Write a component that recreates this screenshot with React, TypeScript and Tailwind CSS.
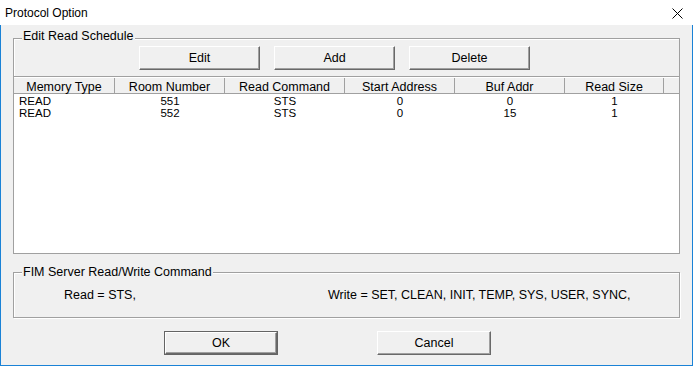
import React from "react";

const font = { fontFamily: '"Liberation Sans", Arial, sans-serif' };

function ClassicButton({ label, width, isDefault }: { label: string; width: string; isDefault?: boolean }) {
  if (isDefault) {
    return (
      <div className={`${width} h-[24px] border border-[#646464] box-border`}>
        <div className="w-full h-full box-border border border-t-white border-l-white border-r-[#696969] border-b-[#696969] shadow-[inset_-1px_-1px_0_#a0a0a0] bg-[#f0f0f0] flex items-center justify-center text-[12.5px] leading-[14px] text-black">
          {label}
        </div>
      </div>
    );
  }
  return (
    <div
      className={`${width} h-[24px] box-border border border-t-white border-l-white border-r-[#696969] border-b-[#696969] shadow-[inset_-1px_-1px_0_#a0a0a0] bg-[#f0f0f0] flex items-center justify-center text-[12.5px] leading-[14px] text-black`}
    >
      {label}
    </div>
  );
}

const rows = [
  ["READ", "551", "STS", "0", "0", "1"],
  ["READ", "552", "STS", "0", "15", "1"],
];

export default function App() {
  return (
    <div className="w-[693px] h-[366px] bg-[#f0f0f0] flex flex-col text-black overflow-hidden" style={font}>
      {/* Title bar */}
      <div className="h-[25px] bg-white flex items-center justify-between pl-[5px] pr-[10px] shrink-0">
        <span className="text-[12px] leading-[14px]">Protocol Option</span>
        <svg width="11" height="11" viewBox="0 0 11 11" className="mt-[1px]">
          <path d="M0.5 0.5 L10.5 10.5 M10.5 0.5 L0.5 10.5" stroke="#000" strokeWidth="1" fill="none" />
        </svg>
      </div>

      {/* Body */}
      <div className="flex-1 flex flex-col border-l border-r border-b border-[#1a82d6] px-[12px] pt-[13px]">
        {/* Group 1 top part */}
        <div className="relative h-[38px] box-border border-t border-l border-r border-[#a0a0a0] shadow-[inset_1px_1px_0_#fff]">
          <span className="absolute left-[8px] -top-[10px] px-[1px] bg-[#f0f0f0] text-[12.5px] leading-[14px]">
            Edit Read Schedule
          </span>
          <div className="flex gap-[14px] pl-[125px] pt-[7px]">
            <ClassicButton label="Edit" width="w-[121px]" />
            <ClassicButton label="Add" width="w-[121px]" />
            <ClassicButton label="Delete" width="w-[121px]" />
          </div>
        </div>

        {/* List view */}
        <div className="h-[178px] box-border border border-[#a0a0a0] bg-white flex flex-col">
          <div className="h-[17px] box-border border-b border-[#a0a0a0] border-t border-t-white bg-[#f0f0f0] flex text-[12.5px] leading-[14px]">
            <div className="w-[101px] box-border border-r border-[#a0a0a0] pt-[2px] text-center">Memory Type</div>
            <div className="w-[110px] box-border border-r border-[#a0a0a0] pt-[2px] text-center">Room Number</div>
            <div className="w-[120px] box-border border-r border-[#a0a0a0] pt-[2px] text-center">Read Command</div>
            <div className="w-[110px] box-border border-r border-[#a0a0a0] pt-[2px] text-center">Start Address</div>
            <div className="w-[110px] box-border border-r border-[#a0a0a0] pt-[2px] text-center">Buf Addr</div>
            <div className="w-[99px] box-border border-r border-[#a0a0a0] pt-[2px] text-center">Read Size</div>
            <div className="flex-1" />
          </div>
          <div className="flex flex-col">
            {rows.map((r, i) => (
              <div key={i} className="flex h-[12px] text-[11.5px] leading-[12px] pt-[1px]">
                <div className="w-[101px] pl-[5px]">{r[0]}</div>
                <div className="w-[110px] text-center">{r[1]}</div>
                <div className="w-[120px] text-center">{r[2]}</div>
                <div className="w-[110px] text-center">{r[3]}</div>
                <div className="w-[110px] text-center">{r[4]}</div>
                <div className="w-[99px] text-center">{r[5]}</div>
              </div>
            ))}
          </div>
        </div>

        {/* Group 2 */}
        <div className="relative mt-[18px] h-[46px] box-border border border-[#a0a0a0] shadow-[inset_1px_1px_0_#fff,1px_1px_0_#fff]">
          <span className="absolute left-[8px] -top-[8px] px-[1px] bg-[#f0f0f0] text-[12.5px] leading-[14px]">
            FIM Server Read/Write Command
          </span>
          <div className="flex pl-[50px] pt-[15px] text-[12.5px] leading-[14px]">
            <span className="w-[264px]">Read = STS,</span>
            <span>Write = SET, CLEAN, INIT, TEMP, SYS, USER, SYNC,</span>
          </div>
        </div>

        {/* Dialog buttons */}
        <div className="flex mt-[13px] pl-[151px] gap-[99px]">
          <ClassicButton label="OK" width="w-[114px]" isDefault />
          <ClassicButton label="Cancel" width="w-[114px]" />
        </div>
      </div>
    </div>
  );
}
